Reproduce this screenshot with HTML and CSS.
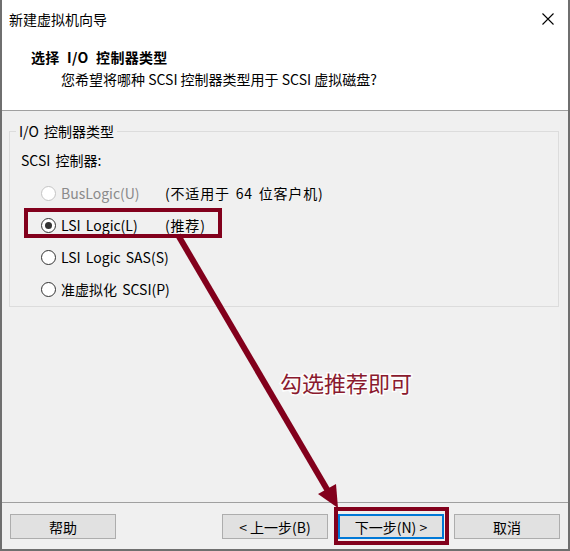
FILE: index.html
```html
<!DOCTYPE html>
<html>
<head>
<meta charset="utf-8">
<link rel="stylesheet" href="styles.css">
</head>
<body>
<div class="window">
  <div class="titlebar">
    <span class="title">新建虚拟机向导</span>
    <svg class="close" width="12" height="12" viewBox="0 0 12 12"><path d="M0.5 0.5 L11.5 11.5 M11.5 0.5 L0.5 11.5" stroke="#000" stroke-width="1.1" fill="none"/></svg>
  </div>
  <div class="header">
    <div class="h-title">选择 I/O 控制器类型</div>
    <div class="h-sub">您希望将哪种 SCSI 控制器类型用于 SCSI 虚拟磁盘?</div>
  </div>
  <div class="content">
    <fieldset class="group">
      <legend>I/O 控制器类型</legend>
      <div class="label">SCSI 控制器:</div>
      <div class="rows">
        <div class="row disabled"><span class="radio"></span><span class="opt">BusLogic(U)</span><span class="note">(不适用于 64 位客户机)</span></div>
        <div class="row"><span class="radio checked"></span><span class="opt">LSI Logic(L)</span><span class="note">(推荐)</span></div>
        <div class="row"><span class="radio"></span><span class="opt">LSI Logic SAS(S)</span></div>
        <div class="row"><span class="radio"></span><span class="opt">准虚拟化 SCSI(P)</span></div>
      </div>
    </fieldset>
  </div>
  <div class="footer">
    <button class="btn">帮助</button>
    <button class="btn back">&lt; 上一步(B)</button>
    <button class="btn default">下一步(N) &gt;</button>
    <button class="btn">取消</button>
  </div>
  <svg class="annot" width="570" height="551" viewBox="0 0 570 551">
    <rect x="26" y="210" width="194" height="26" fill="none" stroke="#82001c" stroke-width="4"/>
    <rect x="336" y="509" width="111" height="34" fill="none" stroke="#82001c" stroke-width="4"/>
    <line x1="178" y1="235" x2="328" y2="491" stroke="#82001c" stroke-width="6"/>
    <polygon points="338,508 318,494 336,484" fill="#82001c"/>
    <text x="280" y="392" class="annot-text">勾选推荐即可</text>
  </svg>
</div>
</body>
</html>
```
FILE: styles.css
```css
html, body {
  margin: 0;
  padding: 0;
}
body {
  font-family: "Noto Sans CJK SC", "Noto Sans", sans-serif;
  font-size: 14px;
  color: #000;
}
.window {
  position: relative;
  width: 570px;
  height: 551px;
  box-sizing: border-box;
  border-left: 2px solid #6f6f6f;
  border-right: 2px solid #6f6f6f;
  border-bottom: 2px solid #6f6f6f;
  background: #f0f0f0;
  display: flex;
  flex-direction: column;
}
.titlebar {
  height: 36px;
  box-sizing: border-box;
  padding: 9px 14px 0 7px;
  background: #fff;
  display: flex;
  align-items: flex-start;
  justify-content: space-between;
  line-height: 20px;
}
.close {
  margin-top: 4px;
}
.header {
  height: 75px;
  box-sizing: border-box;
  background: #fff;
  border-bottom: 1px solid #a0a0a0;
  padding: 11px 0 0 29px;
}
.h-title {
  font-weight: bold;
  line-height: 20px;
  word-spacing: 4px;
  letter-spacing: 0.3px;
}
.h-sub {
  line-height: 20px;
  margin-top: 2px;
  padding-left: 30px;
}
.content {
  flex: 1;
  padding: 10px 9px 0 7px;
  border-bottom: 1px solid #a0a0a0;
}
.group {
  margin: 0;
  padding: 0 0 7px 0;
  border: 1px solid #dcdcdc;
  min-width: 0;
}
.group legend {
  margin-left: 6px;
  padding: 0 3px;
  line-height: 20px;
  word-spacing: 2px;
}
.label {
  line-height: 20px;
  margin-top: 9px;
  padding-left: 11px;
  word-spacing: 2px;
}
.rows {
  margin-top: 13px;
  padding-left: 31px;
  display: flex;
  flex-direction: column;
  gap: 12px;
}
.row {
  display: flex;
  align-items: center;
  height: 20px;
  line-height: 20px;
  white-space: nowrap;
}
.radio {
  width: 15px;
  height: 15px;
  box-sizing: border-box;
  border: 1px solid #333;
  border-radius: 50%;
  background: #fff;
  margin-right: 5px;
  display: flex;
  align-items: center;
  justify-content: center;
  flex-shrink: 0;
}
.radio.checked::after {
  content: "";
  width: 7px;
  height: 7px;
  border-radius: 50%;
  background: #333;
}
.row.disabled .radio {
  border-color: #c4c4c4;
}
.row.disabled .opt {
  color: #8a8a8a;
}
.opt {
  min-width: 104px;
  flex-shrink: 0;
  word-spacing: 2px;
}
.note {
  word-spacing: 2px;
  letter-spacing: 0.8px;
}
.footer {
  height: 46px;
  box-sizing: border-box;
  padding: 11px 8px 0 8px;
  display: flex;
  gap: 10px;
}
.btn {
  width: 106px;
  height: 25px;
  box-sizing: border-box;
  border: 1px solid #adadad;
  background: #e1e1e1;
  font-family: "Noto Sans CJK SC", "Noto Sans", sans-serif;
  font-size: 14px;
  color: #000;
  padding: 0;
  line-height: 20px;
}
.btn.back {
  margin-left: auto;
}
.btn.default {
  border: 2px solid #0078d7;
}
.annot {
  position: absolute;
  left: -2px;
  top: 0;
  pointer-events: none;
}
.annot-text {
  font-family: "Noto Sans CJK SC", sans-serif;
  font-size: 22px;
  fill: #8a1a2e;
  stroke: rgba(255,255,255,0.85);
  stroke-width: 3px;
  paint-order: stroke;
}
```
